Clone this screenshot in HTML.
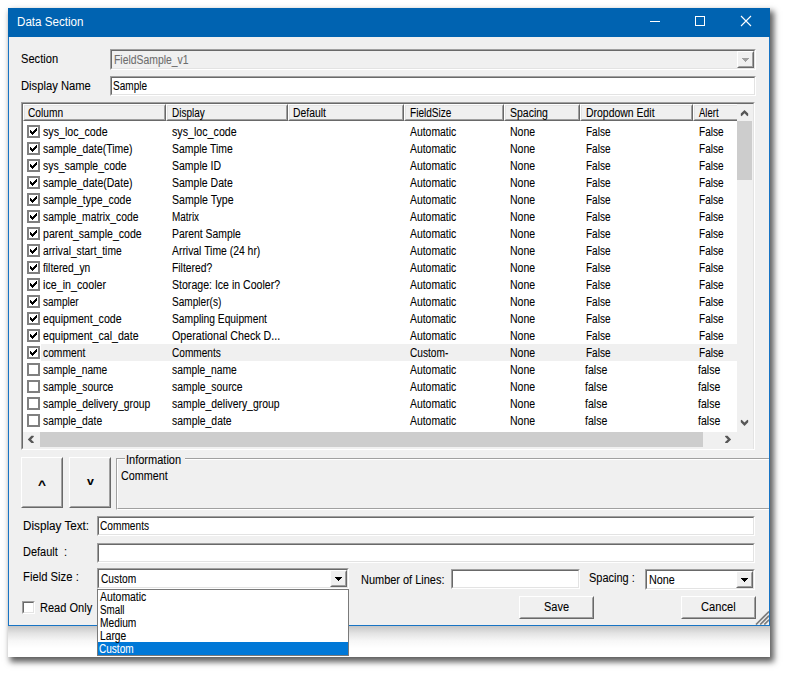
<!DOCTYPE html>
<html>
<head>
<meta charset="utf-8">
<title>Data Section</title>
<style>
html,body{margin:0;padding:0;background:#fff;}
body{width:786px;height:673px;position:relative;overflow:hidden;font-family:"Liberation Sans",sans-serif;font-size:11px;color:#000;}
div,span{position:absolute;box-sizing:border-box;white-space:nowrap;}
.x{-webkit-text-stroke:0.08px currentColor;z-index:5;height:14px;line-height:14px;font-size:12px;transform-origin:0 0;white-space:pre;}
#shadow{left:8px;top:8px;width:762px;height:649px;background:#fff;box-shadow:3px 4px 6px 1px rgba(0,0,0,.63);}
#ghost{left:8px;top:626px;width:762px;height:31px;background:linear-gradient(#c6c6c6,#e4e4e4 24%,#f7f7f7 48%,#fff 72%);}
#win{left:8px;top:8px;width:762px;height:618px;background:#f0f0f0;border:1px solid #1874c4;border-top:none;}
#title{left:8px;top:8px;width:762px;height:29px;background:#0063b1;}

.sunk{border:1px solid;border-color:#a0a0a0 #fff #fff #a0a0a0;}
.sunk>i{position:absolute;left:0;top:0;right:0;bottom:0;border:1px solid;border-color:#696969 #e3e3e3 #e3e3e3 #696969;}
.white{background:#fff;}
.btn{border:1px solid;border-color:#fff #696969 #696969 #fff;background:#f0f0f0;text-align:center;}
.btn>i{position:absolute;left:0;top:0;right:0;bottom:0;border:1px solid;border-color:#f0f0f0 #a0a0a0 #a0a0a0 #f0f0f0;}
.hdr{top:104px;height:17px;background:#f0f0f0;border:1px solid;border-color:#fff #696969 #696969 #fff;}
.hdr>i{position:absolute;left:0;top:0;right:0;bottom:0;border:1px solid;border-color:#e3e3e3 #a0a0a0 #a0a0a0 #e3e3e3;}

.cb{left:27px;width:13px;height:13px;border:2px solid #808080;background:#fff;}
.cb svg{position:absolute;left:-2px;top:-2px;}
.selrow{left:41px;width:696px;height:17px;background:#f0f0f0;}
.lbl{height:17px;line-height:17px;}
.cbtn{width:17px;height:17px;background:#f0f0f0;border:1px solid;border-color:#fff #696969 #696969 #fff;}
.cbtn>i{position:absolute;left:0;top:0;right:0;bottom:0;border:1px solid;border-color:#f0f0f0 #a0a0a0 #a0a0a0 #f0f0f0;}
.cbtn>svg{position:absolute;left:-1px;top:-1px;}

</style>
</head>
<body>
<div id="shadow"></div>
<div id="ghost"></div>
<div id="win"></div>
<div id="title">
  <svg style="position:absolute;left:632px;top:0" width="130" height="29" viewBox="0 0 130 29">
    <path d="M10 13.5 H20" stroke="#fff" stroke-width="1" fill="none"/>
    <rect x="55.5" y="8.500" width="9" height="9" stroke="#fff" stroke-width="1" fill="none"/>
    <path d="M101 8 L111 18 M111 8 L101 18" stroke="#fff" stroke-width="1.1" fill="none"/>
  </svg>
</div>

<span class="x" style="left:16.55px;top:15px;transform:scaleX(0.9671);color:#fff;-webkit-text-stroke:0">Data Section</span>
<!-- Section -->
<span class="x" style="left:20.90px;top:52px;transform:scaleX(0.9262);">Section</span>
<div class="sunk" style="left:110px;top:49px;width:646px;height:21px;background:#f0f0f0"><i></i>
  <div class="cbtn" style="right:1px;top:1px"><i></i><svg width="17" height="17" viewBox="0 0 17 17" shape-rendering="crispEdges"><path d="M5 7h7v1h-7z M6 8h5v1h-5z M7 9h3v1h-3z M8 10h1v1h-1z" fill="#a0a0a0"/></svg></div>
</div>
<span class="x" style="left:21.48px;top:79px;transform:scaleX(0.9353);">Display Name</span>
<div class="sunk white" style="left:110px;top:76px;width:646px;height:20px"><i></i>
</div>

<span class="x" style="left:113.55px;top:53px;transform:scaleX(0.8659);color:#6d6d6d">FieldSample_v1</span>
<span class="x" style="left:112.74px;top:79px;transform:scaleX(0.8369);">Sample</span>
<!-- list view -->
<div class="sunk white" style="left:21px;top:102px;width:734px;height:348px"><i></i></div>
<div class="hdr" style="left:23px;width:143px"><i></i></div><span class="x" style="left:27.78px;top:106px;transform:scaleX(0.8494);">Column</span>
<div class="hdr" style="left:166px;width:122px"><i></i></div><span class="x" style="left:171.78px;top:106px;transform:scaleX(0.8305);">Display</span>
<div class="hdr" style="left:288px;width:116px"><i></i></div><span class="x" style="left:293.45px;top:106px;transform:scaleX(0.8645);">Default</span>
<div class="hdr" style="left:404px;width:100px"><i></i></div><span class="x" style="left:409.77px;top:106px;transform:scaleX(0.8392);">FieldSize</span>
<div class="hdr" style="left:504px;width:76px"><i></i></div><span class="x" style="left:510.02px;top:106px;transform:scaleX(0.8738);">Spacing</span>
<div class="hdr" style="left:580px;width:113px"><i></i></div><span class="x" style="left:585.64px;top:106px;transform:scaleX(0.8713);">Dropdown Edit</span>
<div class="hdr" style="left:693px;width:60px"><i></i></div><span class="x" style="left:699.08px;top:106px;transform:scaleX(0.7914);">Alert</span>
<div class="cb" style="top:125px"><svg viewBox="0 0 13 13" width="13" height="13" shape-rendering="crispEdges"><path d="M3 5h1v3h-1z M4 6h1v3h-1z M5 7h1v3h-1z M6 6h1v3h-1z M7 5h1v3h-1z M8 4h1v3h-1z M9 3h1v3h-1z" fill="#000"/></svg></div>
<span class="x" style="left:42.80px;top:125px;transform:scaleX(0.8886);">sys_loc_code</span>
<span class="x" style="left:171.80px;top:125px;transform:scaleX(0.8900);">sys_loc_code</span>
<span class="x" style="left:409.78px;top:125px;transform:scaleX(0.8667);">Automatic</span>
<span class="x" style="left:509.94px;top:125px;transform:scaleX(0.8778);">None</span>
<span class="x" style="left:585.98px;top:125px;transform:scaleX(0.8355);">False</span>
<span class="x" style="left:698.87px;top:125px;transform:scaleX(0.8391);">False</span>
<div class="cb" style="top:142px"><svg viewBox="0 0 13 13" width="13" height="13" shape-rendering="crispEdges"><path d="M3 5h1v3h-1z M4 6h1v3h-1z M5 7h1v3h-1z M6 6h1v3h-1z M7 5h1v3h-1z M8 4h1v3h-1z M9 3h1v3h-1z" fill="#000"/></svg></div>
<span class="x" style="left:42.81px;top:142px;transform:scaleX(0.8693);">sample_date(Time)</span>
<span class="x" style="left:171.73px;top:142px;transform:scaleX(0.8680);">Sample Time</span>
<span class="x" style="left:409.78px;top:142px;transform:scaleX(0.8667);">Automatic</span>
<span class="x" style="left:509.94px;top:142px;transform:scaleX(0.8778);">None</span>
<span class="x" style="left:585.98px;top:142px;transform:scaleX(0.8355);">False</span>
<span class="x" style="left:698.87px;top:142px;transform:scaleX(0.8391);">False</span>
<div class="cb" style="top:159px"><svg viewBox="0 0 13 13" width="13" height="13" shape-rendering="crispEdges"><path d="M3 5h1v3h-1z M4 6h1v3h-1z M5 7h1v3h-1z M6 6h1v3h-1z M7 5h1v3h-1z M8 4h1v3h-1z M9 3h1v3h-1z" fill="#000"/></svg></div>
<span class="x" style="left:42.81px;top:159px;transform:scaleX(0.8703);">sys_sample_code</span>
<span class="x" style="left:171.72px;top:159px;transform:scaleX(0.8750);">Sample ID</span>
<span class="x" style="left:409.78px;top:159px;transform:scaleX(0.8667);">Automatic</span>
<span class="x" style="left:509.94px;top:159px;transform:scaleX(0.8778);">None</span>
<span class="x" style="left:585.98px;top:159px;transform:scaleX(0.8355);">False</span>
<span class="x" style="left:698.87px;top:159px;transform:scaleX(0.8391);">False</span>
<div class="cb" style="top:176px"><svg viewBox="0 0 13 13" width="13" height="13" shape-rendering="crispEdges"><path d="M3 5h1v3h-1z M4 6h1v3h-1z M5 7h1v3h-1z M6 6h1v3h-1z M7 5h1v3h-1z M8 4h1v3h-1z M9 3h1v3h-1z" fill="#000"/></svg></div>
<span class="x" style="left:42.81px;top:176px;transform:scaleX(0.8769);">sample_date(Date)</span>
<span class="x" style="left:171.72px;top:176px;transform:scaleX(0.8763);">Sample Date</span>
<span class="x" style="left:409.78px;top:176px;transform:scaleX(0.8667);">Automatic</span>
<span class="x" style="left:509.94px;top:176px;transform:scaleX(0.8778);">None</span>
<span class="x" style="left:585.98px;top:176px;transform:scaleX(0.8355);">False</span>
<span class="x" style="left:698.87px;top:176px;transform:scaleX(0.8391);">False</span>
<div class="cb" style="top:193px"><svg viewBox="0 0 13 13" width="13" height="13" shape-rendering="crispEdges"><path d="M3 5h1v3h-1z M4 6h1v3h-1z M5 7h1v3h-1z M6 6h1v3h-1z M7 5h1v3h-1z M8 4h1v3h-1z M9 3h1v3h-1z" fill="#000"/></svg></div>
<span class="x" style="left:42.81px;top:193px;transform:scaleX(0.8767);">sample_type_code</span>
<span class="x" style="left:171.72px;top:193px;transform:scaleX(0.8822);">Sample Type</span>
<span class="x" style="left:409.78px;top:193px;transform:scaleX(0.8667);">Automatic</span>
<span class="x" style="left:509.94px;top:193px;transform:scaleX(0.8778);">None</span>
<span class="x" style="left:585.98px;top:193px;transform:scaleX(0.8355);">False</span>
<span class="x" style="left:698.87px;top:193px;transform:scaleX(0.8391);">False</span>
<div class="cb" style="top:210px"><svg viewBox="0 0 13 13" width="13" height="13" shape-rendering="crispEdges"><path d="M3 5h1v3h-1z M4 6h1v3h-1z M5 7h1v3h-1z M6 6h1v3h-1z M7 5h1v3h-1z M8 4h1v3h-1z M9 3h1v3h-1z" fill="#000"/></svg></div>
<span class="x" style="left:42.81px;top:210px;transform:scaleX(0.8616);">sample_matrix_code</span>
<span class="x" style="left:172.38px;top:210px;transform:scaleX(0.8286);">Matrix</span>
<span class="x" style="left:409.78px;top:210px;transform:scaleX(0.8667);">Automatic</span>
<span class="x" style="left:509.94px;top:210px;transform:scaleX(0.8778);">None</span>
<span class="x" style="left:585.98px;top:210px;transform:scaleX(0.8355);">False</span>
<span class="x" style="left:698.87px;top:210px;transform:scaleX(0.8391);">False</span>
<div class="cb" style="top:227px"><svg viewBox="0 0 13 13" width="13" height="13" shape-rendering="crispEdges"><path d="M3 5h1v3h-1z M4 6h1v3h-1z M5 7h1v3h-1z M6 6h1v3h-1z M7 5h1v3h-1z M8 4h1v3h-1z M9 3h1v3h-1z" fill="#000"/></svg></div>
<span class="x" style="left:42.62px;top:227px;transform:scaleX(0.8806);">parent_sample_code</span>
<span class="x" style="left:172.35px;top:227px;transform:scaleX(0.8662);">Parent Sample</span>
<span class="x" style="left:409.78px;top:227px;transform:scaleX(0.8667);">Automatic</span>
<span class="x" style="left:509.94px;top:227px;transform:scaleX(0.8778);">None</span>
<span class="x" style="left:585.98px;top:227px;transform:scaleX(0.8355);">False</span>
<span class="x" style="left:698.87px;top:227px;transform:scaleX(0.8391);">False</span>
<div class="cb" style="top:244px"><svg viewBox="0 0 13 13" width="13" height="13" shape-rendering="crispEdges"><path d="M3 5h1v3h-1z M4 6h1v3h-1z M5 7h1v3h-1z M6 6h1v3h-1z M7 5h1v3h-1z M8 4h1v3h-1z M9 3h1v3h-1z" fill="#000"/></svg></div>
<span class="x" style="left:42.66px;top:244px;transform:scaleX(0.8545);">arrival_start_time</span>
<span class="x" style="left:172.08px;top:244px;transform:scaleX(0.8656);">Arrival Time (24 hr)</span>
<span class="x" style="left:409.78px;top:244px;transform:scaleX(0.8667);">Automatic</span>
<span class="x" style="left:509.94px;top:244px;transform:scaleX(0.8778);">None</span>
<span class="x" style="left:585.98px;top:244px;transform:scaleX(0.8355);">False</span>
<span class="x" style="left:698.87px;top:244px;transform:scaleX(0.8391);">False</span>
<div class="cb" style="top:261px"><svg viewBox="0 0 13 13" width="13" height="13" shape-rendering="crispEdges"><path d="M3 5h1v3h-1z M4 6h1v3h-1z M5 7h1v3h-1z M6 6h1v3h-1z M7 5h1v3h-1z M8 4h1v3h-1z M9 3h1v3h-1z" fill="#000"/></svg></div>
<span class="x" style="left:43.15px;top:261px;transform:scaleX(0.8535);">filtered_yn</span>
<span class="x" style="left:172.35px;top:261px;transform:scaleX(0.8606);">Filtered?</span>
<span class="x" style="left:409.78px;top:261px;transform:scaleX(0.8667);">Automatic</span>
<span class="x" style="left:509.94px;top:261px;transform:scaleX(0.8778);">None</span>
<span class="x" style="left:585.98px;top:261px;transform:scaleX(0.8355);">False</span>
<span class="x" style="left:698.87px;top:261px;transform:scaleX(0.8391);">False</span>
<div class="cb" style="top:278px"><svg viewBox="0 0 13 13" width="13" height="13" shape-rendering="crispEdges"><path d="M3 5h1v3h-1z M4 6h1v3h-1z M5 7h1v3h-1z M6 6h1v3h-1z M7 5h1v3h-1z M8 4h1v3h-1z M9 3h1v3h-1z" fill="#000"/></svg></div>
<span class="x" style="left:42.58px;top:278px;transform:scaleX(0.8915);">ice_in_cooler</span>
<span class="x" style="left:171.72px;top:278px;transform:scaleX(0.8808);">Storage: Ice in Cooler?</span>
<span class="x" style="left:409.78px;top:278px;transform:scaleX(0.8667);">Automatic</span>
<span class="x" style="left:509.94px;top:278px;transform:scaleX(0.8778);">None</span>
<span class="x" style="left:585.98px;top:278px;transform:scaleX(0.8355);">False</span>
<span class="x" style="left:698.87px;top:278px;transform:scaleX(0.8391);">False</span>
<div class="cb" style="top:295px"><svg viewBox="0 0 13 13" width="13" height="13" shape-rendering="crispEdges"><path d="M3 5h1v3h-1z M4 6h1v3h-1z M5 7h1v3h-1z M6 6h1v3h-1z M7 5h1v3h-1z M8 4h1v3h-1z M9 3h1v3h-1z" fill="#000"/></svg></div>
<span class="x" style="left:42.82px;top:295px;transform:scaleX(0.8362);">sampler</span>
<span class="x" style="left:171.74px;top:295px;transform:scaleX(0.8406);">Sampler(s)</span>
<span class="x" style="left:409.78px;top:295px;transform:scaleX(0.8667);">Automatic</span>
<span class="x" style="left:509.94px;top:295px;transform:scaleX(0.8778);">None</span>
<span class="x" style="left:585.98px;top:295px;transform:scaleX(0.8355);">False</span>
<span class="x" style="left:698.87px;top:295px;transform:scaleX(0.8391);">False</span>
<div class="cb" style="top:312px"><svg viewBox="0 0 13 13" width="13" height="13" shape-rendering="crispEdges"><path d="M3 5h1v3h-1z M4 6h1v3h-1z M5 7h1v3h-1z M6 6h1v3h-1z M7 5h1v3h-1z M8 4h1v3h-1z M9 3h1v3h-1z" fill="#000"/></svg></div>
<span class="x" style="left:42.65px;top:312px;transform:scaleX(0.8866);">equipment_code</span>
<span class="x" style="left:171.73px;top:312px;transform:scaleX(0.8578);">Sampling Equipment</span>
<span class="x" style="left:409.78px;top:312px;transform:scaleX(0.8667);">Automatic</span>
<span class="x" style="left:509.94px;top:312px;transform:scaleX(0.8778);">None</span>
<span class="x" style="left:585.98px;top:312px;transform:scaleX(0.8355);">False</span>
<span class="x" style="left:698.87px;top:312px;transform:scaleX(0.8391);">False</span>
<div class="cb" style="top:329px"><svg viewBox="0 0 13 13" width="13" height="13" shape-rendering="crispEdges"><path d="M3 5h1v3h-1z M4 6h1v3h-1z M5 7h1v3h-1z M6 6h1v3h-1z M7 5h1v3h-1z M8 4h1v3h-1z M9 3h1v3h-1z" fill="#000"/></svg></div>
<span class="x" style="left:42.65px;top:329px;transform:scaleX(0.8842);">equipment_cal_date</span>
<span class="x" style="left:171.59px;top:329px;transform:scaleX(0.8916);">Operational Check D...</span>
<span class="x" style="left:409.78px;top:329px;transform:scaleX(0.8667);">Automatic</span>
<span class="x" style="left:509.94px;top:329px;transform:scaleX(0.8778);">None</span>
<span class="x" style="left:585.98px;top:329px;transform:scaleX(0.8355);">False</span>
<span class="x" style="left:698.87px;top:329px;transform:scaleX(0.8391);">False</span>
<div class="selrow" style="top:344px"></div>
<div class="cb" style="top:346px"><svg viewBox="0 0 13 13" width="13" height="13" shape-rendering="crispEdges"><path d="M3 5h1v3h-1z M4 6h1v3h-1z M5 7h1v3h-1z M6 6h1v3h-1z M7 5h1v3h-1z M8 4h1v3h-1z M9 3h1v3h-1z" fill="#000"/></svg></div>
<span class="x" style="left:42.66px;top:346px;transform:scaleX(0.8562);">comment</span>
<span class="x" style="left:171.79px;top:346px;transform:scaleX(0.8416);">Comments</span>
<span class="x" style="left:409.79px;top:346px;transform:scaleX(0.8450);">Custom-</span>
<span class="x" style="left:509.94px;top:346px;transform:scaleX(0.8778);">None</span>
<span class="x" style="left:585.98px;top:346px;transform:scaleX(0.8355);">False</span>
<span class="x" style="left:698.87px;top:346px;transform:scaleX(0.8391);">False</span>
<div class="cb" style="top:363px"></div>
<span class="x" style="left:42.82px;top:363px;transform:scaleX(0.8529);">sample_name</span>
<span class="x" style="left:171.81px;top:363px;transform:scaleX(0.8583);">sample_name</span>
<span class="x" style="left:409.78px;top:363px;transform:scaleX(0.8667);">Automatic</span>
<span class="x" style="left:509.94px;top:363px;transform:scaleX(0.8778);">None</span>
<span class="x" style="left:584.85px;top:363px;transform:scaleX(0.8781);">false</span>
<span class="x" style="left:697.85px;top:363px;transform:scaleX(0.8781);">false</span>
<div class="cb" style="top:380px"></div>
<span class="x" style="left:42.81px;top:380px;transform:scaleX(0.8651);">sample_source</span>
<span class="x" style="left:171.81px;top:380px;transform:scaleX(0.8676);">sample_source</span>
<span class="x" style="left:409.78px;top:380px;transform:scaleX(0.8667);">Automatic</span>
<span class="x" style="left:509.94px;top:380px;transform:scaleX(0.8778);">None</span>
<span class="x" style="left:584.85px;top:380px;transform:scaleX(0.8781);">false</span>
<span class="x" style="left:697.85px;top:380px;transform:scaleX(0.8781);">false</span>
<div class="cb" style="top:397px"></div>
<span class="x" style="left:42.81px;top:397px;transform:scaleX(0.8646);">sample_delivery_group</span>
<span class="x" style="left:171.81px;top:397px;transform:scaleX(0.8662);">sample_delivery_group</span>
<span class="x" style="left:409.78px;top:397px;transform:scaleX(0.8667);">Automatic</span>
<span class="x" style="left:509.94px;top:397px;transform:scaleX(0.8778);">None</span>
<span class="x" style="left:584.85px;top:397px;transform:scaleX(0.8781);">false</span>
<span class="x" style="left:697.85px;top:397px;transform:scaleX(0.8781);">false</span>
<div class="cb" style="top:414px"></div>
<span class="x" style="left:42.81px;top:414px;transform:scaleX(0.8614);">sample_date</span>
<span class="x" style="left:171.81px;top:414px;transform:scaleX(0.8673);">sample_date</span>
<span class="x" style="left:409.78px;top:414px;transform:scaleX(0.8667);">Automatic</span>
<span class="x" style="left:509.94px;top:414px;transform:scaleX(0.8778);">None</span>
<span class="x" style="left:584.85px;top:414px;transform:scaleX(0.8781);">false</span>
<span class="x" style="left:697.85px;top:414px;transform:scaleX(0.8781);">false</span>
<!-- scrollbars -->
<div style="left:737px;top:104px;width:16px;height:345px;background:#f0f0f0"></div>
<div style="left:737px;top:121px;width:15px;height:59px;background:#cdcdcd"></div>
<div style="left:23px;top:432px;width:730px;height:17px;background:#f0f0f0"></div>
<div style="left:40px;top:432px;width:663px;height:15px;background:#cdcdcd"></div>
<svg style="position:absolute;left:0;top:0;z-index:6" width="786" height="673" viewBox="0 0 786 673">
  <g fill="#575757">
    <path d="M744.5 110 L748.2 113.6 L748.2 115.6 L747.4 116.2 L744.5 113.3 L741.6 116.2 L740.8 115.6 L740.8 113.6 Z"/>
    <path d="M744.5 425.900 L748.2 422.3 L748.2 420.3 L747.4 419.7 L744.5 422.6 L741.6 419.7 L740.8 420.3 L740.8 422.3 Z"/>
    <path d="M27.800 439.4 L31.4 435.7 L33.4 435.7 L34 436.5 L31.100 439.4 L34 442.3 L33.4 443.1 L31.4 443.1 Z"/>
    <path d="M731.1 439.4 L727.5 435.7 L725.5 435.7 L724.9 436.5 L727.800 439.4 L724.9 442.3 L725.5 443.1 L727.5 443.1 Z"/>
  </g>
</svg>

<!-- panel lines -->

<!-- up/down buttons -->
<div class="btn" style="left:21px;top:457px;width:42px;height:51px"><i></i></div><span class="x" style="left:38.3px;top:476.8px;font-weight:bold;transform:scale(1.14,1.06)">^</span>
<div class="btn" style="left:69px;top:457px;width:42px;height:51px"><i></i></div><span class="x" style="left:87px;top:475.4px;font-weight:bold;transform:scale(1.03,0.92)">v</span>

<!-- group box -->
<div style="left:116px;top:458px;width:653px;height:52px;border:1px solid #a0a0a0;border-right:none;border-bottom:1px solid #fff"></div>
<div style="left:117px;top:459px;width:652px;height:50px;border:1px solid #fff;border-right:none;border-bottom:1px solid #a0a0a0"></div>
<div style="left:125px;top:456px;width:60px;height:5px;background:#f0f0f0"></div><span class="x" style="left:126.28px;top:453px;transform:scaleX(0.9175);">Information</span>
<span class="x" style="left:120.65px;top:469px;transform:scaleX(0.8973);">Comment</span>

<!-- fields -->
<span class="x" style="left:22.64px;top:519px;transform:scaleX(0.9744);">Display Text:</span>
<div class="sunk white" style="left:97px;top:516px;width:658px;height:20px"><i></i>
</div>
<span class="x" style="left:22.70px;top:545px;transform:scaleX(0.9151);">Default  :</span><span class="x" style="left:99.58px;top:519px;transform:scaleX(0.8451);">Comments</span>
<div class="sunk white" style="left:97px;top:543px;width:658px;height:20px"><i></i></div>
<span class="x" style="left:22.67px;top:570px;transform:scaleX(0.9401);">Field Size :</span><span class="x" style="left:100.58px;top:572px;transform:scaleX(0.8500);">Custom</span>
<div class="sunk white" style="left:97px;top:568px;width:252px;height:21px"><i></i>
  <div class="cbtn" style="right:1px;top:1px"><i></i><svg width="17" height="17" viewBox="0 0 17 17" shape-rendering="crispEdges"><path d="M5 7h7v1h-7z M6 8h5v1h-5z M7 9h3v1h-3z M8 10h1v1h-1z" fill="#000"/></svg></div>
</div>
<span class="x" style="left:360.70px;top:573px;transform:scaleX(0.9131);">Number of Lines:</span>
<div class="sunk white" style="left:451px;top:569px;width:129px;height:20px"><i></i></div>
<span class="x" style="left:589.10px;top:571px;transform:scaleX(0.9141);">Spacing :</span><span class="x" style="left:649.11px;top:573px;transform:scaleX(0.8999);">None</span>
<div class="sunk white" style="left:645px;top:569px;width:110px;height:21px"><i></i>
  <div class="cbtn" style="right:1px;top:1px"><i></i><svg width="17" height="17" viewBox="0 0 17 17" shape-rendering="crispEdges"><path d="M5 7h7v1h-7z M6 8h5v1h-5z M7 9h3v1h-3z M8 10h1v1h-1z" fill="#000"/></svg></div>
</div>

<!-- read only -->
<div class="sunk white" style="left:22px;top:601px;width:13px;height:13px"><i></i></div>
<span class="x" style="left:40.19px;top:601px;transform:scaleX(0.9202);">Read Only</span>

<!-- buttons -->
<div class="btn" style="left:519px;top:596px;width:75px;height:23px"><i></i></div><span class="x" style="left:543.80px;top:600px;transform:scaleX(0.9189);">Save</span>
<div class="btn" style="left:681px;top:596px;width:75px;height:23px"><i></i></div><span class="x" style="left:700.93px;top:600px;transform:scaleX(0.9277);">Cancel</span>

<!-- grip -->
<svg style="position:absolute;left:755px;top:610px" width="14" height="15" viewBox="0 0 14 15">
  <path d="M1 14.500 L14 1.500 M5.200 14.500 L14 5.700 M9.300 14.500 L14 9.800" stroke="#7c7c7c" stroke-width="1.7" fill="none"/>
</svg>

<!-- dropdown list -->
<div style="left:97px;top:589px;width:252px;height:67px;background:#fff;border:1px solid #7a7a7a"></div>
<div style="left:98px;top:642px;width:250px;height:13px;background:#0078d7"></div>
<span class="x" style="left:100.28px;top:590px;transform:scaleX(0.8667);">Automatic</span>
<span class="x" style="left:99.85px;top:603px;transform:scaleX(0.8180);">Small</span>
<span class="x" style="left:100.46px;top:616px;transform:scaleX(0.8518);">Medium</span>
<span class="x" style="left:100.46px;top:629px;transform:scaleX(0.8549);">Large</span>
<span class="x" style="left:99.39px;top:642px;transform:scaleX(0.8374);color:#fff">Custom</span>
</body>
</html>
